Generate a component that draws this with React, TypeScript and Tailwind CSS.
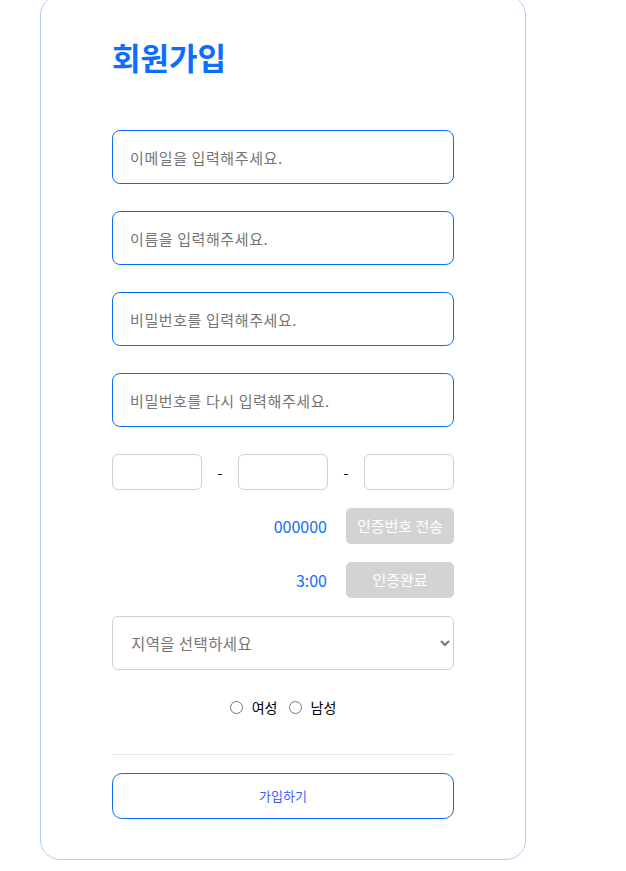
import { useState } from 'react'

const font = { fontFamily: '"Noto Sans CJK KR", "Noto Sans", sans-serif' }

export default function App() {
  const [gender, setGender] = useState('')

  return (
    <div className="min-h-[871px] bg-white" style={font}>
      <div className="ml-[40px] -mt-[5px] w-[486px] rounded-[20px] border border-[#aecbfa] px-[71px] pt-[41px] pb-[40px]">
        <h1 className="text-[31px] font-bold leading-[40px] text-[#0d6efd]">회원가입</h1>

        <div className="mt-[53px] flex flex-col gap-[27px]">
          <input
            className="h-[54px] w-full rounded-lg border border-[#0d6efd] px-[17px] text-[15px] tracking-[0.6px] outline-none placeholder:text-[#757575]"
            placeholder="이메일을 입력해주세요."
          />
          <input
            className="h-[54px] w-full rounded-lg border border-[#0d6efd] px-[17px] text-[15px] tracking-[0.6px] outline-none placeholder:text-[#757575]"
            placeholder="이름을 입력해주세요."
          />
          <input
            type="password"
            className="h-[54px] w-full rounded-lg border border-[#0d6efd] px-[17px] text-[15px] tracking-[0.6px] outline-none placeholder:text-[#757575]"
            placeholder="비밀번호를 입력해주세요."
          />
          <input
            type="password"
            className="h-[54px] w-full rounded-lg border border-[#0d6efd] px-[17px] text-[15px] tracking-[0.6px] outline-none placeholder:text-[#757575]"
            placeholder="비밀번호를 다시 입력해주세요."
          />
        </div>

        <div className="mt-[27px] grid grid-cols-[90px_1fr_90px_1fr_90px] items-center">
          <input className="h-[36px] w-full rounded-md border border-[#d0d0d0] px-2 text-[14px] outline-none" />
          <span className="text-center text-[14px] text-black">-</span>
          <input className="h-[36px] w-full rounded-md border border-[#d0d0d0] px-2 text-[14px] outline-none" />
          <span className="text-center text-[14px] text-black">-</span>
          <input className="h-[36px] w-full rounded-md border border-[#d0d0d0] px-2 text-[14px] outline-none" />
        </div>

        <div className="mt-[18px] flex items-center justify-end gap-[19px]">
          <span className="text-[16px] text-[#0d6efd]">000000</span>
          <button className="h-[36px] w-[108px] rounded-[5px] bg-[#d3d3d3] text-[15px] text-white" disabled>
            인증번호 전송
          </button>
        </div>

        <div className="mt-[18px] flex items-center justify-end gap-[19px]">
          <span className="text-[16px] text-[#0d6efd]">3:00</span>
          <button className="h-[36px] w-[108px] rounded-[5px] bg-[#d3d3d3] text-[15px] text-white" disabled>
            인증완료
          </button>
        </div>

        <select
          className="mt-[18px] h-[54px] w-full rounded-md border border-[#d0d0d0] bg-white pl-[14px] pr-[6px] text-[15.5px] tracking-[0.4px] text-[#757575] outline-none"
          style={font}
          defaultValue=""
        >
          <option value="" disabled>
            지역을 선택하세요
          </option>
          <option value="seoul">서울</option>
          <option value="busan">부산</option>
        </select>

        <div className="mt-[27px] flex h-[20px] items-center justify-center text-[14px] text-black">
          <label className="flex items-center">
            <input
              type="radio"
              name="gender"
              className="m-0 h-[13px] w-[13px]"
              checked={gender === 'female'}
              onChange={() => setGender('female')}
            />
            <span className="ml-[9px]">여성</span>
          </label>
          <label className="ml-[11px] flex items-center">
            <input
              type="radio"
              name="gender"
              className="m-0 h-[13px] w-[13px]"
              checked={gender === 'male'}
              onChange={() => setGender('male')}
            />
            <span className="ml-[9px]">남성</span>
          </label>
        </div>

        <hr className="mt-[37px] border-[#e5e5e5]" />

        <button className="mt-[18px] h-[46px] w-full rounded-[10px] border border-[#0d6efd] text-[13px] text-[#3d5afe]">
          가입하기
        </button>
      </div>
    </div>
  )
}
